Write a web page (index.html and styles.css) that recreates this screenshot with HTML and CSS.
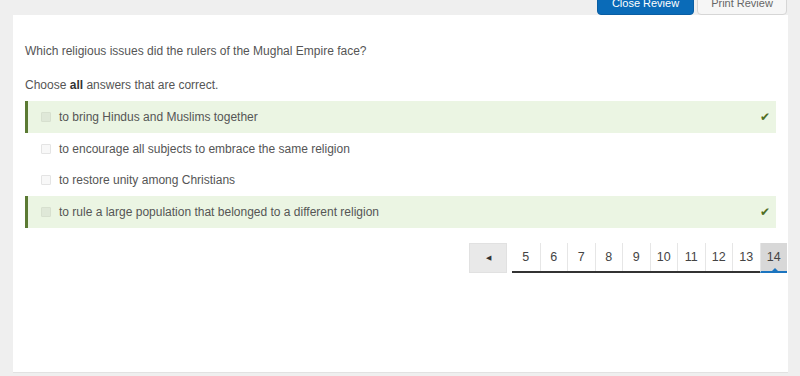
FILE: index.html
```html
<!DOCTYPE html>
<html lang="en">
<head>
    <meta charset="UTF-8">
    <title>Review</title>
    <link rel="stylesheet" href="styles.css">
</head>
<body>
    <div class="topbar">
        <button class="btn btn-primary">Close Review</button>
        <button class="btn btn-default">Print Review</button>
    </div>

    <div class="panel">
        <p class="question">Which religious issues did the rulers of the Mughal Empire face?</p>
        <p class="prompt">Choose <strong>all</strong> answers that are correct.</p>

        <ul class="answers">
            <li class="answer correct">
                <span class="box"></span>
                <span class="label">to bring Hindus and Muslims together</span>
                <span class="tick">&#10004;</span>
            </li>
            <li class="answer">
                <span class="box"></span>
                <span class="label">to encourage all subjects to embrace the same religion</span>
            </li>
            <li class="answer">
                <span class="box"></span>
                <span class="label">to restore unity among Christians</span>
            </li>
            <li class="answer correct">
                <span class="box"></span>
                <span class="label">to rule a large population that belonged to a different religion</span>
                <span class="tick">&#10004;</span>
            </li>
        </ul>

        <div class="pager">
            <button class="pager-prev">&#9664;</button>
            <div class="pages">
                <span class="page">5</span>
                <span class="page">6</span>
                <span class="page">7</span>
                <span class="page">8</span>
                <span class="page">9</span>
                <span class="page">10</span>
                <span class="page">11</span>
                <span class="page">12</span>
                <span class="page">13</span>
                <span class="page active">14</span>
            </div>
        </div>
    </div>
</body>
</html>
```

FILE: styles.css
```css
body {
    margin: 0;
    background: #efefef;
    font-family: "Liberation Sans", Arial, sans-serif;
    color: #555;
    width: 800px;
    height: 376px;
    overflow: hidden;
}
.topbar {
    display: flex;
    justify-content: flex-end;
    gap: 3px;
    height: 15px;
    padding-right: 13px;
}
.btn {
    font-family: "Liberation Sans", Arial, sans-serif;
    font-size: 11px;
    height: 24px;
    margin-top: -9px;
    padding: 0;
    border-radius: 0 0 4px 4px;
    line-height: 12px;
}
.btn-primary {
    width: 97px;
    background: #0a6bb8;
    border: 1px solid #0a5ea3;
    color: #fff;
}
.btn-default {
    width: 90px;
    background: #f6f6f6;
    border: 1px solid #d6d6d6;
    color: #666;
}
.panel {
    background: #fff;
    margin-left: 13px;
    width: 751px;
    height: 357px;
    padding: 0 12px;
    border-bottom: 1px solid #e2e2e2;
    overflow: hidden;
}
.question {
    font-size: 12px;
    margin: 28px 0 0;
    line-height: 16px;
}
.prompt {
    font-size: 12px;
    margin: 18px 0 0;
    line-height: 16px;
}
.prompt strong {
    color: #333;
}
.answers {
    list-style: none;
    margin: 8px 0 0;
    padding: 0;
}
.answer {
    display: flex;
    align-items: center;
    height: 31.7px;
    padding-left: 13px;
    font-size: 12px;
    border-left: 3px solid transparent;
}
.answer.correct {
    background: #ebf5e3;
    border-left-color: #5b7a33;
}
.box {
    width: 8px;
    height: 8px;
    border: 1px solid #e4e4e4;
    background: #f8f8f8;
    border-radius: 1px;
    margin-right: 8px;
}
.correct .box {
    background: #dfe8d8;
    border-color: #d7e0cf;
}
.label {
    flex: 1;
}
.tick {
    color: #4f6e25;
    font-size: 12px;
    margin-right: 6px;
}
.pager {
    display: flex;
    justify-content: flex-end;
    align-items: flex-start;
    gap: 5px;
    margin-top: 15px;
    margin-right: -11px;
}
.pager-prev {
    width: 38px;
    height: 30px;
    background: #e9e9e9;
    border: 1px solid #e1e1e1;
    color: #333;
    font-size: 7px;
    padding: 0;
}
.pages {
    display: flex;
    border-bottom: 2px solid #333;
}
.page {
    width: 27.5px;
    height: 28px;
    display: flex;
    align-items: center;
    justify-content: center;
    font-size: 12.5px;
    color: #444;
    border-left: 1px solid #e6e6e6;
    box-sizing: border-box;
    position: relative;
}
.page:first-child {
    border-left: none;
}
.page.active {
    background: #d8d8d8;
    border-bottom: 2px solid #1b74bf;
    margin-bottom: -2px;
    height: 30px;
}
.page.active::after {
    content: "";
    position: absolute;
    bottom: 0;
    left: 11px;
    border: 3px solid transparent;
    border-bottom-color: #1b74bf;
}
```
